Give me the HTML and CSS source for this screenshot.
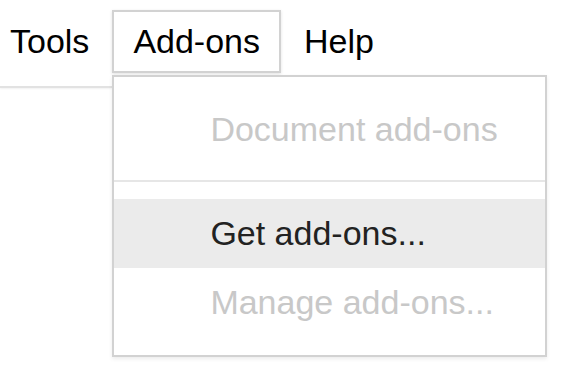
FILE: index.html
```html
<!DOCTYPE html>
<html lang="en">
<head>
    <meta charset="UTF-8">
    <title>Add-ons menu</title>
    <link rel="stylesheet" href="styles.css">
</head>
<body>

<div class="menubar">
    <span class="menubar-item first">Tools</span>
    <div class="menubar-item open">Add-ons
        <div class="dropdown">
            <div class="dropdown-item disabled">Document add-ons</div>
            <div class="separator"></div>
            <div class="dropdown-item hover">Get add-ons...</div>
            <div class="dropdown-item disabled">Manage add-ons...</div>
        </div>
    </div>
    <span class="menubar-item">Help</span>
</div>
<div class="rule"></div>

</body>
</html>
```

FILE: styles.css
```css
html, body {
    min-height: 100%;
}

body {
    margin: 0;
    padding: 0;
    min-height: 100vh;
    background-color: #ffffff;
    font-family: 'Liberation Sans', Arial, sans-serif;
}

.menubar {
    display: flex;
    align-items: flex-start;
    padding-top: 10px;
}

.menubar-item {
    font-size: 34px;
    line-height: 39px;
    color: #000;
    padding: 10px 21px;
    border: 2px solid transparent;
}

.menubar-item.first {
    padding-left: 10px;
    padding-right: 21px;
    border-left: none;
}

.menubar-item.open {
    position: relative;
    padding: 10px 19px;
    border-color: #d2d2d2;
    box-shadow: 0 1px 3px rgba(0, 0, 0, 0.12);
}

.rule {
    width: 112px;
    height: 2px;
    margin-top: 13px;
    background-color: #e2e2e2;
    box-shadow: 0 1px 2px rgba(0, 0, 0, 0.06);
}

.dropdown {
    position: absolute;
    left: -2px;
    top: 100%;
    margin-top: 4px;
    width: 431px;
    padding: 18px 0;
    background: #fff;
    border: 2px solid #d2d2d2;
    box-shadow: 0 2px 4px rgba(0, 0, 0, 0.08);
    z-index: 2;
}

.dropdown-item {
    font-size: 34px;
    line-height: 69px;
    padding-left: 96px;
    color: #222;
    white-space: nowrap;
}

.dropdown-item.disabled {
    color: #c8c8c8;
}

.dropdown-item.hover {
    background-color: #ebebeb;
}

.separator {
    height: 2px;
    margin: 16px 0 17px;
    background-color: #e6e6e6;
}
```
